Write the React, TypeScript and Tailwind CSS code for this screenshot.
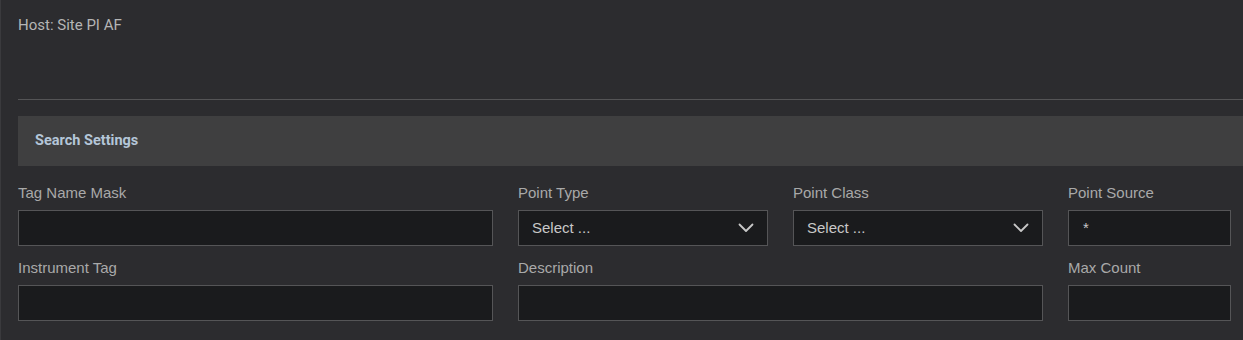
import React from "react";

const Chevron = () => (
  <svg width="16" height="10" viewBox="0 0 16 10" fill="none" className="shrink-0">
    <path d="M1.5 1.5 L8 8 L14.5 1.5" stroke="#c8c8c8" strokeWidth="1.8" strokeLinecap="round" strokeLinejoin="round" />
  </svg>
);

const Label = ({ children }: { children: React.ReactNode }) => (
  <div className="text-[15px] leading-[17px] text-[#a9a9a9] h-[17px] mb-[9px] whitespace-nowrap">
    {children}
  </div>
);

const Input = ({ value }: { value?: string }) => (
  <div className="h-[36px] border border-[#555557] bg-[#1a1b1d] flex items-center pl-[14px] text-[15px] text-[#c8c8c8]">
    {value}
  </div>
);

const Select = () => (
  <div className="h-[36px] border border-[#555557] bg-[#1a1b1d] flex items-center justify-between pl-[13px] pr-[13px] text-[15px] text-[#c8c8c8]">
    <span>Select ...</span>
    <Chevron />
  </div>
);

export default function App() {
  return (
    <div
      className="w-[1243px] h-[340px] overflow-hidden bg-[#2c2c2f] border-l border-[#3a3a3d] pl-[17px]"
      style={{ fontFamily: '"Liberation Sans", Arial, sans-serif' }}
    >
      <div
        className="pt-[17px] text-[15px] leading-[17px] text-[#b5b5b5] h-[99px]"
        style={{ fontFamily: 'Roboto, "Liberation Sans", sans-serif' }}
      >
        Host: Site PI AF
      </div>
      <div className="h-px bg-[#545456]" />
      <div className="mt-[16px] h-[50px] bg-[#3f3f40] flex items-center pl-[17px]">
        <span
          className="text-[14.5px] font-bold text-[#b4c6d8]"
          style={{ fontFamily: 'Roboto, "Liberation Sans", sans-serif' }}
        >
          Search Settings
        </span>
      </div>
      <div className="grid grid-cols-[475px_250px_250px_163px] gap-x-[25px] pt-[18px]">
        <div>
          <Label>Tag Name Mask</Label>
          <Input />
        </div>
        <div>
          <Label>Point Type</Label>
          <Select />
        </div>
        <div>
          <Label>Point Class</Label>
          <Select />
        </div>
        <div>
          <Label>Point Source</Label>
          <Input value="*" />
        </div>
        <div className="mt-[13px]">
          <Label>Instrument Tag</Label>
          <Input />
        </div>
        <div className="mt-[13px] col-span-2">
          <Label>Description</Label>
          <Input />
        </div>
        <div className="mt-[13px]">
          <Label>Max Count</Label>
          <Input />
        </div>
      </div>
    </div>
  );
}
